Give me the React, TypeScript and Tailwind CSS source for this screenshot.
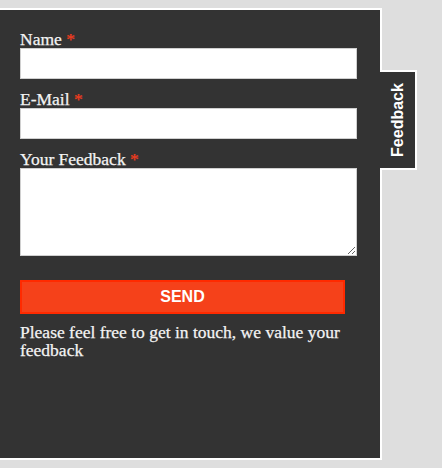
import React from 'react';

const serif = "font-['Liberation_Serif','Times_New_Roman',serif] [-webkit-text-stroke:0.25px_#f4f4f4]";
const sans = "font-['Liberation_Sans',Arial,sans-serif]";

const Field = ({ label, children }: { label: string; children: React.ReactNode }) => (
  <label className="block">
    <span className={`block text-[17.5px] leading-[18px] text-[#f4f4f4] ${serif}`}>
      {label} <span className="text-[#f03c1e] [-webkit-text-stroke:0.25px_#f03c1e]">*</span>
    </span>
    {children}
  </label>
);

export default function App() {
  return (
    <div className="min-h-[468px] bg-[#dedede] pt-2">
      <div className="flex items-start">
        {/* Slide-out feedback panel */}
        <div className="w-[382px] h-[452px] bg-[#333333] border-2 border-l-0 border-white pl-5 pt-5">
          <form onSubmit={(e) => e.preventDefault()}>
            <Field label="Name">
              <input type="text" className="block w-[337px] h-[31px] mb-[11px] bg-white border border-[#d0d0d0] outline-none" />
            </Field>
            <Field label="E-Mail">
              <input type="email" className="block w-[337px] h-[31px] mb-[11px] bg-white border border-[#d0d0d0] outline-none" />
            </Field>
            <Field label="Your Feedback">
              <textarea className="block w-[337px] h-[88px] bg-white border border-[#d0d0d0] outline-none" />
            </Field>
            <button
              type="submit"
              className={`mt-6 block w-[325px] h-[34px] bg-[#f5411a] border-2 border-[#ff2a00] text-white text-[16px] font-bold ${sans}`}
            >
              SEND
            </button>
            <p className={`mt-[9px] w-[337px] text-[17.5px] leading-[18px] text-[#f4f4f4] ${serif}`}>
              Please feel free to get in touch, we value your feedback
            </p>
          </form>
        </div>

        {/* Tab handle */}
        <div className="-ml-[2px] mt-[62px] w-[37px] h-[100px] bg-[#333333] border-2 border-l-0 border-white flex items-center justify-center">
          <span className={`block -rotate-90 whitespace-nowrap text-white text-[16px] font-bold ${sans}`}>
            Feedback
          </span>
        </div>
      </div>
    </div>
  );
}
